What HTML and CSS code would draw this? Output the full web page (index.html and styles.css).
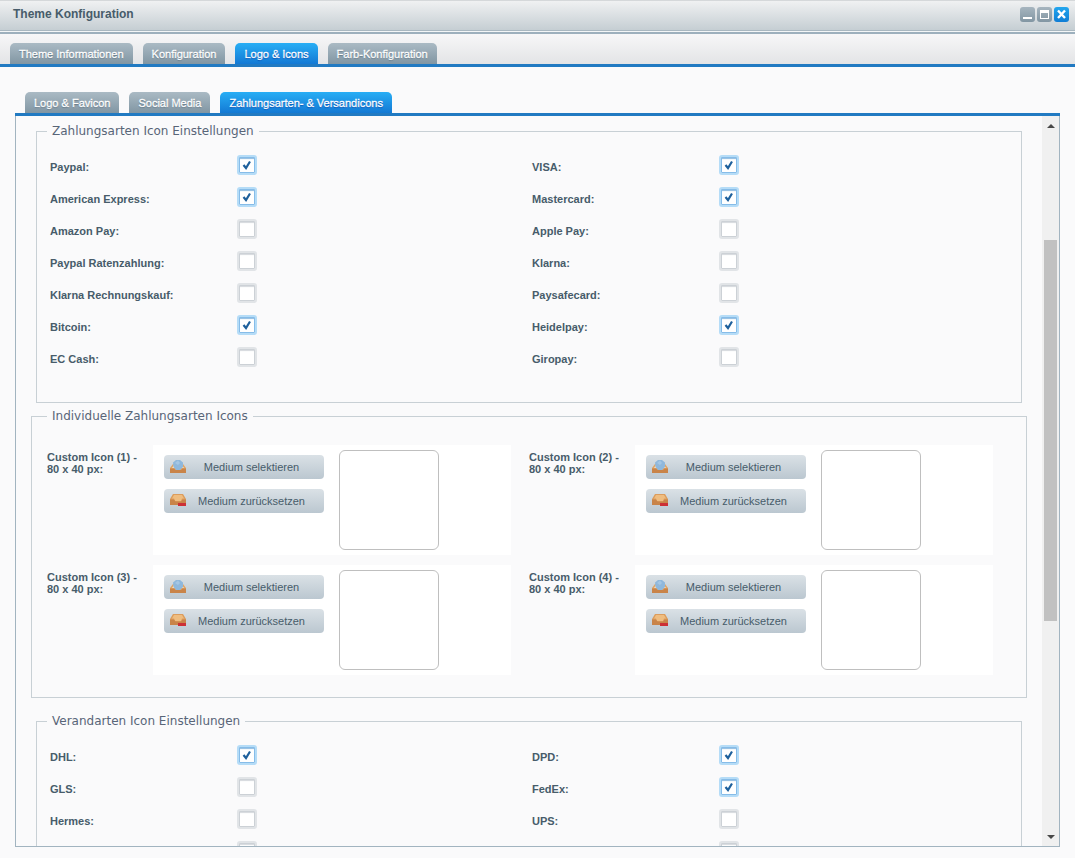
FILE: index.html
```html
<!DOCTYPE html>
<html lang="de">
<head>
<meta charset="utf-8">
<title>Theme Konfiguration</title>
<link rel="stylesheet" href="styles.css">
</head>
<body>
<svg class="sprite" aria-hidden="true">
  <symbol id="select" viewBox="0 0 16 16">
    <path d="M0 9 L3 5 H13 L16 9 V14 H0Z" fill="#dfa466"/>
    <path d="M2 9 L4 6 H12 L14 9Z" fill="#f4dfc0"/>
    <path d="M3 3.500 L6 1 H10 L13 3.500 V8 L10 11 H6 L3.500 8Z" fill="#8fb8dc"/>
    <path d="M5 4 L8 1.500 L10 4 L8 6Z" fill="#a4c6e4"/>
    <path d="M0 9.500 H4 L5.500 11 H11 L12.500 9.500 H16 V14 H0Z" fill="#c98449"/>
  </symbol>
  <symbol id="reset" viewBox="0 0 16 16">
    <path d="M0 6 L3 1 H13 L16 6 V12 H0Z" fill="#dc9d5d"/>
    <path d="M2 5.500 L4 2 H12 L14 5.500 H12 L11 8 H5 L4 5.500Z" fill="#efbd80"/>
    <path d="M0 6.500 H4 L5.500 8.500 H11 L12.500 6.500 H16 V12 H0Z" fill="#c98449"/>
    <rect x="8" y="10" width="8" height="3" fill="#cc3035"/>
  </symbol>
</svg>
<header class="titlebar">
  <h1>Theme Konfiguration</h1>
  <div class="tools">
    <button type="button" aria-label="Minimieren"><svg viewBox="0 0 15 15"><path d="M3 10h9v2H3z" fill="#fff"/></svg></button>
    <button type="button" aria-label="Maximieren"><svg viewBox="0 0 15 15"><path d="M3 3h9v9H3zM4 6v5h7V6z" fill="#fff" fill-rule="evenodd"/></svg></button>
    <button type="button" class="close" aria-label="Schließen"><svg viewBox="0 0 15 15"><path d="M4 3.500l7 7.500M11 3.500L4 11" stroke="#fff" stroke-width="2.400"/></svg></button>
  </div>
</header>
<nav class="tabs main-tabs">
  <button type="button">Theme Informationen</button>
  <button type="button">Konfiguration</button>
  <button type="button" class="active">Logo &amp; Icons</button>
  <button type="button">Farb-Konfiguration</button>
</nav>
<main class="content">
  <nav class="tabs sub-tabs">
    <button type="button">Logo &amp; Favicon</button>
    <button type="button">Social Media</button>
    <button type="button" class="active">Zahlungsarten- &amp; Versandicons</button>
  </nav>
  <div class="panel">
    <form class="fields">
      <fieldset class="checks">
        <legend>Zahlungsarten Icon Einstellungen</legend>
        <div class="check-grid">
          <div class="row"><label for="c1">Paypal:</label><input type="checkbox" id="c1" checked></div>
          <div class="row"><label for="c2">VISA:</label><input type="checkbox" id="c2" checked></div>
          <div class="row"><label for="c3">American Express:</label><input type="checkbox" id="c3" checked></div>
          <div class="row"><label for="c4">Mastercard:</label><input type="checkbox" id="c4" checked></div>
          <div class="row"><label for="c5">Amazon Pay:</label><input type="checkbox" id="c5"></div>
          <div class="row"><label for="c6">Apple Pay:</label><input type="checkbox" id="c6"></div>
          <div class="row"><label for="c7">Paypal Ratenzahlung:</label><input type="checkbox" id="c7"></div>
          <div class="row"><label for="c8">Klarna:</label><input type="checkbox" id="c8"></div>
          <div class="row"><label for="c9">Klarna Rechnungskauf:</label><input type="checkbox" id="c9"></div>
          <div class="row"><label for="c10">Paysafecard:</label><input type="checkbox" id="c10"></div>
          <div class="row"><label for="c11">Bitcoin:</label><input type="checkbox" id="c11" checked></div>
          <div class="row"><label for="c12">Heidelpay:</label><input type="checkbox" id="c12" checked></div>
          <div class="row"><label for="c13">EC Cash:</label><input type="checkbox" id="c13"></div>
          <div class="row"><label for="c14">Giropay:</label><input type="checkbox" id="c14"></div>
        </div>
      </fieldset>
      <fieldset class="custom">
        <legend>Individuelle Zahlungsarten Icons</legend>
        <div class="media-grid">
          <div class="media"><span class="name">Custom Icon (1) - 80 x 40 px:</span><div class="picker"><div class="actions"><button type="button"><svg><use href="#select"/></svg><span>Medium selektieren</span></button><button type="button"><svg><use href="#reset"/></svg><span>Medium zurücksetzen</span></button></div><div class="preview"></div></div></div>
          <div class="media"><span class="name">Custom Icon (2) - 80 x 40 px:</span><div class="picker"><div class="actions"><button type="button"><svg><use href="#select"/></svg><span>Medium selektieren</span></button><button type="button"><svg><use href="#reset"/></svg><span>Medium zurücksetzen</span></button></div><div class="preview"></div></div></div>
          <div class="media"><span class="name">Custom Icon (3) - 80 x 40 px:</span><div class="picker"><div class="actions"><button type="button"><svg><use href="#select"/></svg><span>Medium selektieren</span></button><button type="button"><svg><use href="#reset"/></svg><span>Medium zurücksetzen</span></button></div><div class="preview"></div></div></div>
          <div class="media"><span class="name">Custom Icon (4) - 80 x 40 px:</span><div class="picker"><div class="actions"><button type="button"><svg><use href="#select"/></svg><span>Medium selektieren</span></button><button type="button"><svg><use href="#reset"/></svg><span>Medium zurücksetzen</span></button></div><div class="preview"></div></div></div>
        </div>
      </fieldset>
      <fieldset class="checks">
        <legend>Verandarten Icon Einstellungen</legend>
        <div class="check-grid">
          <div class="row"><label for="v1">DHL:</label><input type="checkbox" id="v1" checked></div>
          <div class="row"><label for="v2">DPD:</label><input type="checkbox" id="v2" checked></div>
          <div class="row"><label for="v3">GLS:</label><input type="checkbox" id="v3"></div>
          <div class="row"><label for="v4">FedEx:</label><input type="checkbox" id="v4" checked></div>
          <div class="row"><label for="v5">Hermes:</label><input type="checkbox" id="v5"></div>
          <div class="row"><label for="v6">UPS:</label><input type="checkbox" id="v6"></div>
          <div class="row"><input type="checkbox" id="v7" aria-label="Versandart"></div>
          <div class="row"><input type="checkbox" id="v8" aria-label="Versandart"></div>
        </div>
      </fieldset>
    </form>
    <div class="scrollbar" aria-hidden="true">
      <svg class="arrow" viewBox="0 0 8 4"><path d="M4 0l4 4H0z"/></svg>
      <div class="track"><div class="thumb"></div></div>
      <svg class="arrow" viewBox="0 0 8 4"><path d="M0 0h8L4 4z"/></svg>
    </div>
  </div>
</main>
</body>
</html>
```
FILE: styles.css
```css
* { box-sizing: border-box; }
body {
  margin: 0;
  height: 100vh;
  display: flex;
  flex-direction: column;
  overflow: hidden;
  background: #fafafb;
  color: #475c6a;
  font: 11px/12px "Liberation Sans", Arial, sans-serif;
}
button { border: 0; font: inherit; color: inherit; cursor: pointer; }
.sprite { display: none; }

.titlebar {
  flex: none;
  height: 34px;
  display: flex;
  justify-content: space-between;
  padding: 6px 6px 0 13px;
  border-top: 1px solid #d5d8da;
  border-bottom: 2px solid #9db0bd;
  background: linear-gradient(#f0f1f2, #c5ced3 29px, #a9b8c1 29px, #a9b8c1 30px, #f3f6f7 30px);
}
.titlebar h1 { margin: 0; font-size: 12px; line-height: 14px; }
.tools { display: flex; gap: 2px; }
.tools button {
  width: 15px;
  height: 15px;
  padding: 0;
  border-radius: 3px;
  background: linear-gradient(#a6b5bf, #8296a3);
}
.tools .close { background: linear-gradient(#22a6ee, #0f7dd5); }
.tools svg { display: block; width: 15px; height: 15px; }

.tabs { flex: none; display: flex; border-bottom: 3px solid #217ac2; }
.tabs button {
  height: 21px;
  padding: 1px 9px 0;
  border-radius: 5px 5px 0 0;
  background: linear-gradient(#aabac4, #8196a3);
  color: #fff;
  -webkit-text-stroke: 0.4px #fff;
  paint-order: stroke fill;
  text-shadow: 0 1px 1px #647987;
}
.tabs .active {
  background: linear-gradient(#28aef5, #1379d4);
  text-shadow: 0 1px 1px #0652b4;
}
.main-tabs {
  gap: 10px;
  padding: 9px 10px 0;
  background: linear-gradient(#f7f7f8, #e3e4e6);
}
.sub-tabs { gap: 10px; padding: 0 10px; }

.content {
  flex: 1;
  min-height: 0;
  display: flex;
  flex-direction: column;
  padding: 25px 15px 11px;
}
.panel {
  flex: 1;
  min-height: 0;
  display: flex;
  border: 1px solid #a2b4c0;
  border-top: 0;
}
.fields { flex: 1; min-width: 0; padding: 7px 15px; overflow: hidden; }

fieldset { min-width: 0; margin: 0; border: 1px solid #c8d0d5; }
legend { padding: 0 5px; color: #586578; font: 12px/16px "DejaVu Sans", Verdana, sans-serif; }
.checks { margin: 0 5px; padding: 10px 7px 29px 13px; }
.checks legend { margin-left: -3px; }
.check-grid { display: grid; grid-template-columns: 1fr 1fr; }
.row { display: flex; align-items: center; height: 32px; }
.row label { flex: none; width: 187px; padding-top: 4px; font-weight: bold; }
.row input:first-child { margin-left: 187px; }
.row input {
  appearance: none;
  width: 20px;
  height: 20px;
  margin: 0;
  border: 2px solid #e1e4e7;
  border-radius: 3px;
  background: #fff;
  box-shadow: inset 0 0 0 1px #ccd1d6, inset 0 2px 1px #d5d9dd;
}
.row input:checked {
  border-color: #b5dcf7;
  background: #fff url("data:image/svg+xml,%3Csvg xmlns='http://www.w3.org/2000/svg' viewBox='0 0 14 14'%3E%3Cpath d='M3.500 7l2.500 3L10 3.500' fill='none' stroke='%231e609c' stroke-width='2.200'/%3E%3C/svg%3E") center / 14px 14px no-repeat;
  box-shadow: inset 0 0 0 1px #86bce8, inset 0 2px 1px #8fbce0;
}

.custom { margin: 5px 0 15px; padding: 21px 15px 22px; }
.media-grid { display: grid; grid-template-columns: 1fr 1fr; row-gap: 10px; }
.media { display: flex; padding-right: 18px; }
.name { flex: none; width: 106px; padding: 6px 10px 0 0; font-weight: bold; }
.picker { flex: 1; display: flex; gap: 15px; height: 110px; padding: 5px 11px; background: #fff; }
.actions { display: flex; flex-direction: column; gap: 10px; padding-top: 5px; }
.actions button {
  display: flex;
  align-items: center;
  width: 160px;
  height: 24px;
  padding: 0 7px 0 6px;
  border-radius: 4px;
  background: linear-gradient(#dae1e6, #bbc7d0);
}
.actions svg { width: 16px; height: 16px; }
.actions span { flex: 1; text-align: center; }
.preview { width: 100px; height: 100px; border: 1px solid #bfbfbf; border-radius: 6px; }

.scrollbar {
  flex: none;
  width: 17px;
  display: flex;
  flex-direction: column;
  align-items: center;
  padding: 8px 0 7px;
  background: #f0f0f0;
}
.arrow { width: 8px; height: 4px; fill: #484848; }
.track { flex: 1; width: 13px; padding: 112px 0 214px; }
.thumb { height: 100%; background: #c1c1c1; }
```
